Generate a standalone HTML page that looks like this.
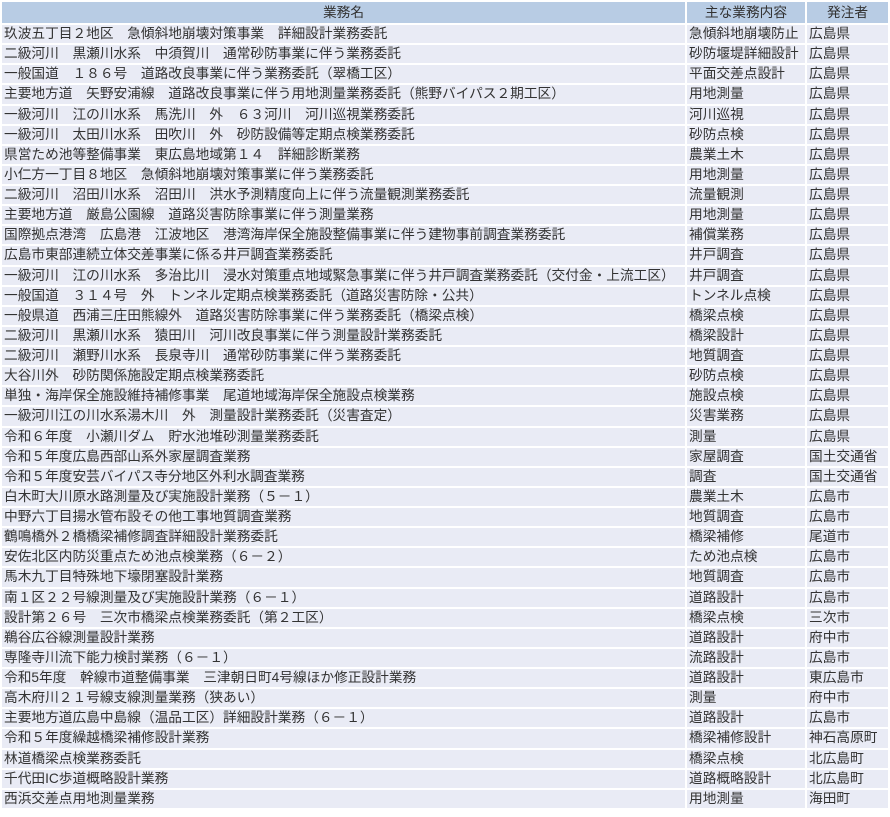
<!DOCTYPE html>
<html><head><meta charset="utf-8"><style>
body{margin:0;background:#fff;font-family:"Liberation Sans","Noto Sans CJK JP",sans-serif;font-size:13.7px;color:#333;}
table{border-collapse:separate;border-spacing:2px;position:absolute;left:0;top:0;width:890px;}
td,th{padding:0 2px;height:18.13px;line-height:18px;white-space:nowrap;overflow:hidden;background:#e9ebf5;font-weight:normal;}
th{background:#b8cce4;text-align:center;color:#333;height:21px;line-height:21px}
</style></head><body>
<table>
<colgroup><col style="width:683px"><col style="width:118px"><col style="width:81px"></colgroup>
<tr><th>業務名</th><th>主な業務内容</th><th>発注者</th></tr>
<tr><td>玖波五丁目２地区　急傾斜地崩壊対策事業　詳細設計業務委託</td><td>急傾斜地崩壊防止</td><td>広島県</td></tr>
<tr><td>二級河川　黒瀬川水系　中須賀川　通常砂防事業に伴う業務委託</td><td>砂防堰堤詳細設計</td><td>広島県</td></tr>
<tr><td>一般国道　１８６号　道路改良事業に伴う業務委託（翠橋工区）</td><td>平面交差点設計</td><td>広島県</td></tr>
<tr><td>主要地方道　矢野安浦線　道路改良事業に伴う用地測量業務委託（熊野バイパス２期工区）</td><td>用地測量</td><td>広島県</td></tr>
<tr><td>一級河川　江の川水系　馬洗川　外　６３河川　河川巡視業務委託</td><td>河川巡視</td><td>広島県</td></tr>
<tr><td>一級河川　太田川水系　田吹川　外　砂防設備等定期点検業務委託</td><td>砂防点検</td><td>広島県</td></tr>
<tr><td>県営ため池等整備事業　東広島地域第１４　詳細診断業務</td><td>農業土木</td><td>広島県</td></tr>
<tr><td>小仁方一丁目８地区　急傾斜地崩壊対策事業に伴う業務委託</td><td>用地測量</td><td>広島県</td></tr>
<tr><td>二級河川　沼田川水系　沼田川　洪水予測精度向上に伴う流量観測業務委託</td><td>流量観測</td><td>広島県</td></tr>
<tr><td>主要地方道　厳島公園線　道路災害防除事業に伴う測量業務</td><td>用地測量</td><td>広島県</td></tr>
<tr><td>国際拠点港湾　広島港　江波地区　港湾海岸保全施設整備事業に伴う建物事前調査業務委託</td><td>補償業務</td><td>広島県</td></tr>
<tr><td>広島市東部連続立体交差事業に係る井戸調査業務委託</td><td>井戸調査</td><td>広島県</td></tr>
<tr><td>一級河川　江の川水系　多治比川　浸水対策重点地域緊急事業に伴う井戸調査業務委託（交付金・上流工区）</td><td>井戸調査</td><td>広島県</td></tr>
<tr><td>一般国道　３１４号　外　トンネル定期点検業務委託（道路災害防除・公共）</td><td>トンネル点検</td><td>広島県</td></tr>
<tr><td>一般県道　西浦三庄田熊線外　道路災害防除事業に伴う業務委託（橋梁点検）</td><td>橋梁点検</td><td>広島県</td></tr>
<tr><td>二級河川　黒瀬川水系　猿田川　河川改良事業に伴う測量設計業務委託</td><td>橋梁設計</td><td>広島県</td></tr>
<tr><td>二級河川　瀬野川水系　長泉寺川　通常砂防事業に伴う業務委託</td><td>地質調査</td><td>広島県</td></tr>
<tr><td>大谷川外　砂防関係施設定期点検業務委託</td><td>砂防点検</td><td>広島県</td></tr>
<tr><td>単独・海岸保全施設維持補修事業　尾道地域海岸保全施設点検業務</td><td>施設点検</td><td>広島県</td></tr>
<tr><td>一級河川江の川水系湯木川　外　測量設計業務委託（災害査定）</td><td>災害業務</td><td>広島県</td></tr>
<tr><td>令和６年度　小瀬川ダム　貯水池堆砂測量業務委託</td><td>測量</td><td>広島県</td></tr>
<tr><td>令和５年度広島西部山系外家屋調査業務</td><td>家屋調査</td><td>国土交通省</td></tr>
<tr><td>令和５年度安芸バイパス寺分地区外利水調査業務</td><td>調査</td><td>国土交通省</td></tr>
<tr><td>白木町大川原水路測量及び実施設計業務（５－１）</td><td>農業土木</td><td>広島市</td></tr>
<tr><td>中野六丁目揚水管布設その他工事地質調査業務</td><td>地質調査</td><td>広島市</td></tr>
<tr><td>鶴鳴橋外２橋橋梁補修調査詳細設計業務委託</td><td>橋梁補修</td><td>尾道市</td></tr>
<tr><td>安佐北区内防災重点ため池点検業務（６－２）</td><td>ため池点検</td><td>広島市</td></tr>
<tr><td>馬木九丁目特殊地下壕閉塞設計業務</td><td>地質調査</td><td>広島市</td></tr>
<tr><td>南１区２２号線測量及び実施設計業務（６－１）</td><td>道路設計</td><td>広島市</td></tr>
<tr><td>設計第２６号　三次市橋梁点検業務委託（第２工区）</td><td>橋梁点検</td><td>三次市</td></tr>
<tr><td>鵜谷広谷線測量設計業務</td><td>道路設計</td><td>府中市</td></tr>
<tr><td>専隆寺川流下能力検討業務（６－１）</td><td>流路設計</td><td>広島市</td></tr>
<tr><td>令和5年度　幹線市道整備事業　三津朝日町4号線ほか修正設計業務</td><td>道路設計</td><td>東広島市</td></tr>
<tr><td>高木府川２１号線支線測量業務（狭あい）</td><td>測量</td><td>府中市</td></tr>
<tr><td>主要地方道広島中島線（温品工区）詳細設計業務（６－１）</td><td>道路設計</td><td>広島市</td></tr>
<tr><td>令和５年度繰越橋梁補修設計業務</td><td>橋梁補修設計</td><td>神石高原町</td></tr>
<tr><td>林道橋梁点検業務委託</td><td>橋梁点検</td><td>北広島町</td></tr>
<tr><td>千代田IC歩道概略設計業務</td><td>道路概略設計</td><td>北広島町</td></tr>
<tr><td>西浜交差点用地測量業務</td><td>用地測量</td><td>海田町</td></tr>
</table>
</body></html>
